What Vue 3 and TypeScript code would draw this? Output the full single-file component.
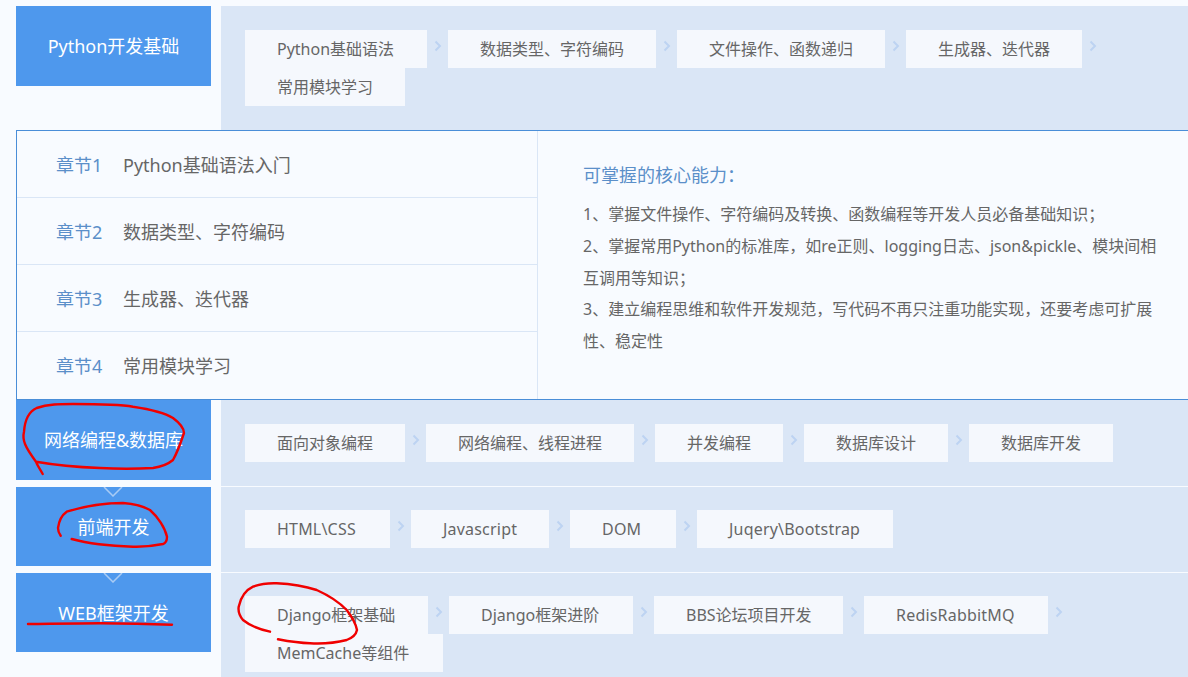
<script setup lang="ts">
interface Row { title: string; tags: string[] }
const first: Row = {
  title: 'Python开发基础',
  tags: ['Python基础语法', '数据类型、字符编码', '文件操作、函数递归', '生成器、迭代器', '常用模块学习'],
}
const rest: Row[] = [
  { title: '网络编程&数据库', tags: ['面向对象编程', '网络编程、线程进程', '并发编程', '数据库设计', '数据库开发'] },
  { title: '前端开发', tags: ['HTML\\CSS', 'Javascript', 'DOM', 'Juqery\\Bootstrap'] },
  { title: 'WEB框架开发', tags: ['Django框架基础', 'Django框架进阶', 'BBS论坛项目开发', 'RedisRabbitMQ', 'MemCache等组件'] },
]
// Box widths of the tags holding latin text, whose font runs a little narrower here.
const tagWidths: Record<string, number> = {
  'Python基础语法': 182,
  'HTML\\CSS': 145,
  Javascript: 138,
  DOM: 106,
  'Juqery\\Bootstrap': 196,
  'Django框架基础': 183,
  'Django框架进阶': 184,
  'BBS论坛项目开发': 189,
  RedisRabbitMQ: 184,
  'MemCache等组件': 198,
}
const tagStyle = (t: string) => (tagWidths[t] ? { width: tagWidths[t] + 'px' } : undefined)
const isLatin = (t: string) => /^[\x00-\x7f]+$/.test(t)
const chapters = [
  ['章节1', 'Python基础语法入门'],
  ['章节2', '数据类型、字符编码'],
  ['章节3', '生成器、迭代器'],
  ['章节4', '常用模块学习'],
]
const points = [
  '1、掌握文件操作、字符编码及转换、函数编程等开发人员必备基础知识；',
  '2、掌握常用Python的标准库，如re正则、logging日志、json&pickle、模块间相互调用等知识；',
  '3、建立编程思维和软件开发规范，写代码不再只注重功能实现，还要考虑可扩展性、稳定性',
]
</script>

<template>
  <div class="page">
    <section class="row first">
      <div class="head">{{ first.title }}</div>
      <div class="tags">
        <template v-for="(t, i) in first.tags" :key="t">
          <span class="tag" :style="tagStyle(t)">{{ t }}</span>
          <svg v-if="i < first.tags.length - 1" class="arrow" viewBox="0 0 21 38">
            <path d="M8.500 11.500L13 16L8.500 20.500" fill="none" stroke="#bdd3f2" stroke-width="2" />
          </svg>
        </template>
      </div>
    </section>

    <section class="panel">
      <ul class="chapters">
        <li v-for="c in chapters" :key="c[0]"><b>{{ c[0] }}</b><span>{{ c[1] }}</span></li>
      </ul>
      <div class="skills">
        <h4>可掌握的核心能力：</h4>
        <p v-for="p in points" :key="p">{{ p }}</p>
      </div>
    </section>

    <section v-for="(r, n) in rest" :key="r.title" class="row" :class="{ tall: n === 0 }">
      <div class="head later" :class="{ short: n > 0 }">
        {{ r.title }}
        <svg v-if="n > 0" class="notch" viewBox="0 0 20 10">
          <path d="M1 0L10 9L19 0" fill="none" stroke="#a9cbf4" stroke-width="1.500" />
        </svg>
      </div>
      <div class="tags">
        <template v-for="(t, i) in r.tags" :key="t">
          <span class="tag" :class="{ latin: isLatin(t) }" :style="tagStyle(t)">{{ t }}</span>
          <svg v-if="i < r.tags.length - 1" class="arrow" viewBox="0 0 21 38">
            <path d="M8.500 11.500L13 16L8.500 20.500" fill="none" stroke="#bdd3f2" stroke-width="2" />
          </svg>
        </template>
      </div>
    </section>

    <svg class="ink" viewBox="0 0 1188 677" fill="none" stroke="#f00000" stroke-width="2.400" stroke-linecap="round">
      <path d="M42.700 474C40 469 37 465 36 461.700C25 447 22 440 24 431.700C25 418 30 411 36.700 408C48 404 60 404 73 404C100 404 118 404 133 406.700C155 410 165 413 173 418C181 424 184 428 184 433C180 445 177 453 173 460C167 465 160 467 153 468C135 469 118 469 100 468C75 467 55 465 36 461.700" />
      <path d="M60.700 535.700C58 532 58 530 58 528C59 520 62 515 66.700 511.700C85 506 105 503 123 503C135 504 143 506 150 510C158 517 165 528 167 536.700C167 541 166 543 163 544C153 546 143 547 133 546.700C110 546 90 544 71.700 539" />
      <path d="M28 624C55 623.500 80 623.500 100 623.300C125 623.500 150 624 172 624.700" />
      <path d="M270 631.700C258 629 249 625 243 620C239 615 238 611 238.700 606.700C241 596 246 590 253 586.700C260 584 268 583 276.700 583.300C290 584 304 586 316.700 590C330 596 339 602 346.700 610C352 617 356 624 357 630C356 635 352 638 346.700 640C335 643 322 644 310 643.300C298 643 287 641 278 639.300" />
    </svg>
  </div>
</template>

<style>
html, body { margin: 0; background: #f8fbff; overflow: hidden; }
</style>

<style scoped>
.page {
  position: relative;
  width: 1188px;
  height: 677px;
  overflow: hidden;
  padding-top: 6px;
  box-sizing: border-box;
  background: #f8fbff;
  font-family: "Noto Sans", "Noto Sans CJK SC", sans-serif;
}
.row {
  display: flex;
  align-items: flex-start;
  padding-left: 16px;
  margin-bottom: 1px;
}
.row.first { margin-bottom: 0; }
.row.first .tags,
.row.tall .tags { padding-top: 24px; }
.head {
  position: relative;
  flex: none;
  width: 195px;
  height: 80px;
  margin-right: 10px;
  background: #4e98ed;
  color: #fff;
  font-size: 18px;
  line-height: 80px;
  text-align: center;
}
.head.later { line-height: 81px; }
.head.short { height: 79px; }
.notch {
  position: absolute;
  top: 0;
  left: 87px;
  width: 20px;
  height: 10px;
}
.tags {
  flex: 1;
  display: flex;
  flex-wrap: wrap;
  padding: 23px 0 24px 24px;
  background: #dae6f6;
}
.tag {
  flex: none;
  box-sizing: border-box;
  height: 38px;
  padding: 0 32px;
  background: #f5f8fd;
  color: #666;
  font-size: 16px;
  line-height: 39px;
  white-space: nowrap;
}
.tag.latin { letter-spacing: 0.2px; }
.arrow { flex: none; width: 21px; height: 38px; }
.panel {
  display: flex;
  height: 270px;
  margin-left: 16px;
  box-sizing: border-box;
  border: 1px solid #4a8ed8;
  border-right: 0;
  background: #f8fbff;
}
.chapters {
  flex: none;
  width: 520px;
  margin: 0;
  padding: 0;
  list-style: none;
  border-right: 1px solid #dae6f6;
}
.chapters li {
  box-sizing: border-box;
  height: 67px;
  padding: 2px 0 0 39px;
  border-bottom: 1px solid #dae6f6;
  color: #666;
  font-size: 18px;
  line-height: 65px;
}
.chapters li:last-child { border-bottom: 0; }
.chapters b {
  display: inline-block;
  width: 67px;
  color: #5b8fc9;
  font-weight: 400;
}
.skills { flex: 1; padding: 28px 24px 0 45px; }
.skills h4 {
  margin: 0 0 8px;
  color: #5b8fc9;
  font-size: 18px;
  font-weight: 400;
  line-height: 32px;
}
.skills p {
  margin: 0;
  color: #666;
  font-size: 16px;
  line-height: 31.800px;
}
.ink {
  position: absolute;
  top: 0;
  left: 0;
  width: 1188px;
  height: 677px;
  pointer-events: none;
}
</style>
